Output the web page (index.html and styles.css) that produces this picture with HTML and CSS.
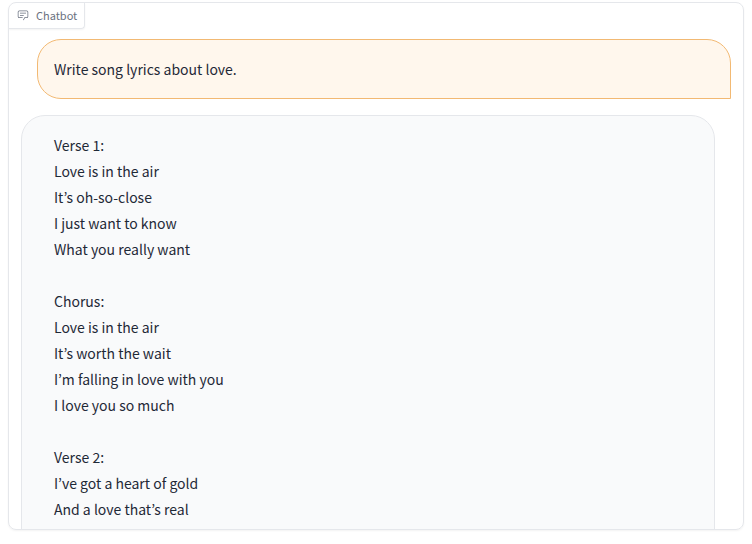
FILE: index.html
```html
<!DOCTYPE html>
<html lang="en">
<head>
    <meta charset="UTF-8">
    <meta name="viewport" content="width=device-width, initial-scale=1.0">
    <title>Chatbot</title>
    <link rel="stylesheet" href="styles.css">
</head>
<body>
    <main class="chatbot">
        <h1 class="chatbot-label">
            <svg class="chat-icon" viewBox="0 0 32 32" aria-hidden="true">
                <path d="M17.74 30L16 29l4-7h6a2 2 0 0 0 2-2V8a2 2 0 0 0-2-2H6a2 2 0 0 0-2 2v12a2 2 0 0 0 2 2h9v2H6a4 4 0 0 1-4-4V8a4 4 0 0 1 4-4h20a4 4 0 0 1 4 4v12a4 4 0 0 1-4 4h-4.84Z"/>
                <path d="M8 10h16v2H8zm0 6h10v2H8z"/>
            </svg>
            Chatbot
        </h1>

        <div class="messages">
            <div class="message user">Write song lyrics about love.</div>
            <div class="message bot">
                <p>
                    Verse 1:<br>
                    Love is in the air<br>
                    It’s oh-so-close<br>
                    I just want to know<br>
                    What you really want
                </p>
                <p>
                    Chorus:<br>
                    Love is in the air<br>
                    It’s worth the wait<br>
                    I’m falling in love with you<br>
                    I love you so much
                </p>
                <p>
                    Verse 2:<br>
                    I’ve got a heart of gold<br>
                    And a love that’s real
                </p>
            </div>
        </div>
    </main>
</body>
</html>
```
FILE: styles.css
```css
* {
    box-sizing: border-box;
}
body {
    margin: 0;
    padding: 2px 8px 14px;
    height: 100vh;
    background-color: #ffffff;
    color: #1f2937;
    font-family: "Source Sans Pro", "Noto Sans CJK KR", sans-serif;
    font-size: 14px;
    line-height: 26px;
}
.chatbot {
    height: 100%;
    overflow: hidden;
    border: 1px solid #e5e7eb;
    border-radius: 8px;
    box-shadow: 0 1px 2px rgba(0, 0, 0, 0.05);
}
.chatbot-label {
    display: flex;
    align-items: center;
    gap: 7px;
    width: fit-content;
    height: 26px;
    margin: 0;
    padding: 0 7px 2px 8px;
    border-right: 1px solid #e5e7eb;
    border-bottom: 1px solid #e5e7eb;
    border-bottom-right-radius: 4px;
    box-shadow: 0 1px 2px rgba(0, 0, 0, 0.05);
    color: #6b7280;
    font-size: 11px;
    font-weight: 400;
}
.chat-icon {
    width: 12px;
    height: 12px;
    fill: currentColor;
}
.messages {
    display: flex;
    flex-direction: column;
    gap: 16px;
    padding: 10px 12px;
}
.message {
    padding: 16px;
    border: 1px solid #e5e7eb;
    border-radius: 24px;
}
.message p {
    margin: 0 0 26px;
}
.user {
    margin-left: 16px;
    border-color: #f2b973;
    border-bottom-right-radius: 0;
    background-color: #fff7ed;
}
.bot {
    margin-right: 16px;
    padding-left: 32px;
    border-bottom-left-radius: 0;
    background-color: #f9fafb;
}
```
